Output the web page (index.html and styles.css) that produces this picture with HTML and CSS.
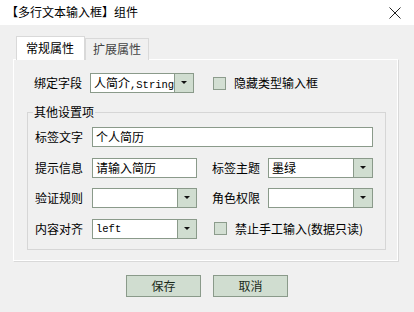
FILE: index.html
```html
<!DOCTYPE html>
<html lang="zh-CN">
<head>
<meta charset="utf-8">
<title>多行文本输入框</title>
<link rel="stylesheet" href="styles.css">
</head>
<body>
<div class="window">
  <div class="titlebar">
    <span class="title">【多行文本输入框】组件</span>
    <svg class="close" width="12" height="12" viewBox="0 0 12 12"><path d="M0.5 0.5 L11.5 11.5 M11.5 0.5 L0.5 11.5" stroke="#222" stroke-width="1" fill="none"/></svg>
  </div>
  <div class="main">
    <div class="tabs">
      <div class="tab active">常规属性</div>
      <div class="tab">扩展属性</div>
    </div>
    <div class="panel">
      <div class="row top-row">
        <span class="label">绑定字段</span>
        <div class="combo w104"><span class="value">人简介<span class="mono">,String</span></span><span class="drop"></span></div>
        <label class="check ml19"><span class="box"></span>隐藏类型输入框</label>
      </div>
      <fieldset class="group">
        <legend>其他设置项</legend>
        <div class="grid">
          <span class="label">标签文字</span>
          <div class="input span3">个人简历</div>

          <span class="label">提示信息</span>
          <div class="input">请输入简历</div>
          <span class="label l2">标签主题</span>
          <div class="combo"><span class="value">墨绿</span><span class="drop"></span></div>

          <span class="label">验证规则</span>
          <div class="combo"><span class="value"></span><span class="drop"></span></div>
          <span class="label l2">角色权限</span>
          <div class="combo"><span class="value"></span><span class="drop"></span></div>

          <span class="label">内容对齐</span>
          <div class="combo"><span class="value mono">left</span><span class="drop"></span></div>
          <label class="check span2"><span class="box"></span>禁止手工输入(数据只读)</label>
        </div>
      </fieldset>
    </div>
    <div class="buttons">
      <button class="btn">保存</button>
      <button class="btn">取消</button>
    </div>
  </div>
</div>
</body>
</html>
```

FILE: styles.css
```css
* { box-sizing: border-box; }
html, body {
  margin: 0;
  padding: 0;
  background: #f0f0f0;
  font-family: "Noto Sans CJK SC", "Noto Sans", sans-serif;
  font-size: 12px;
  color: #000;
}
.window { width: 414px; height: 312px; overflow: hidden; }
.titlebar {
  height: 25px;
  background: #fff;
  display: flex;
  align-items: center;
  justify-content: space-between;
  padding: 0 13px 1px 6px;
}
.title { font-size: 12px; line-height: 16px; }
.close { display: block; margin-top: 1px; }
.main { padding: 11px 16px 0 13px; }
.tabs {
  display: flex;
  align-items: flex-end;
  height: 24px;
  padding-left: 3px;
}
.tab {
  height: 22px;
  width: 64px;
  border: 1px solid #d9d9d9;
  border-bottom: none;
  background: #f0f0f0;
  color: #444;
  padding-left: 7px;
  line-height: 20px;
  font-size: 12px;
}
.tab.active {
  height: 24px;
  width: 69px;
  background: #fff;
  color: #000;
  padding-left: 9px;
  line-height: 22px;
  position: relative;
  z-index: 1;
}
.panel {
  margin-top: -1px;
  width: 386px;
  border: 1px solid #d9d9d9;
  border-top-color: #fff;
  border-left-color: #fff;
  box-shadow: inset -1px -1px 0 #fff;
  padding: 13px 0 11px 0;
}
.row { display: flex; align-items: center; height: 20px; }
.top-row { padding-left: 20px; }
.top-row .label { width: 56px; }
.label { line-height: 16px; white-space: nowrap; }
.combo, .input {
  height: 20px;
  border: 1px solid #8a9a8a;
  background: #fff;
  display: flex;
  align-items: stretch;
  overflow: hidden;
}
.w104 { width: 104px; }
.value {
  flex: 1;
  padding-left: 3px;
  line-height: 18px;
  white-space: nowrap;
  overflow: hidden;
}
.input { padding-left: 3px; line-height: 18px; }
.mono { font-family: "Liberation Mono", "DejaVu Sans Mono", monospace; font-size: 10.5px; }
.drop {
  width: 19px;
  flex: none;
  border-left: 1px solid #8a9a8a;
  background: #d0ddd0;
  position: relative;
}
.drop::after {
  content: "";
  position: absolute;
  left: 6px;
  top: 7px;
  border-left: 3px solid transparent;
  border-right: 3px solid transparent;
  border-top: 3px solid #111;
}
.check { display: flex; align-items: center; gap: 8px; line-height: 16px; white-space: nowrap; }
.ml19 { margin-left: 19px; }
.box {
  width: 13px;
  height: 13px;
  border: 1px solid #8c9c8c;
  background: #d3dfd3;
  flex: none;
}
.group {
  margin: 11px 12px 0 13px;
  border: 1px solid #d6d6d6;
  padding: 7px 11px 10px 7px;
  min-width: 0;
}
.group legend {
  padding: 0 1px;
  margin-left: -2px;
  line-height: 16px;
  font-size: 12px;
}
.grid {
  display: grid;
  grid-template-columns: 57px 105px 71px 105px;
  row-gap: 10.5px;
  grid-auto-rows: 20px;
  align-items: center;
}
.l2 { padding-left: 15px; }
.span3 { grid-column: 2 / 5; }
.span2 { grid-column: 3 / 5; padding-left: 17px; }
.buttons {
  display: flex;
  justify-content: center;
  gap: 12px;
  margin-top: 13px;
  padding-left: 3px;
}
.btn {
  width: 75px;
  height: 22px;
  border: 1px solid #8a9a8a;
  background: #d0ddd0;
  color: #1a2a1a;
  font-family: "Noto Sans CJK SC", sans-serif;
  font-size: 12px;
  padding: 0;
  line-height: 18px;
}
```
